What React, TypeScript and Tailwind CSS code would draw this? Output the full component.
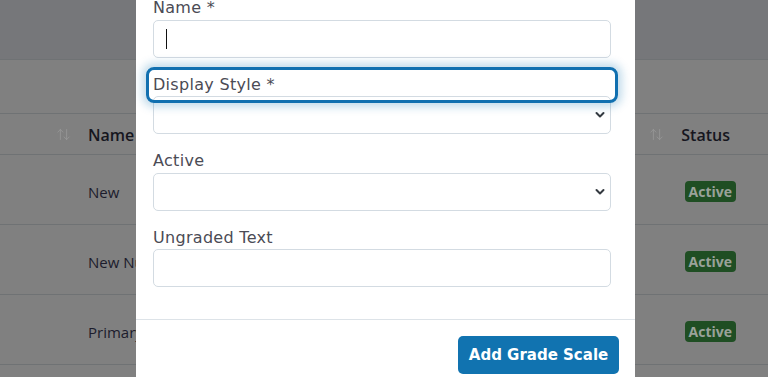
import React from 'react';
import { ArrowUpDown } from 'lucide-react';

const rows = ['New', 'New Number Scale', 'Primary Scale'];

const Chevron = () => (
  <svg
    className="pointer-events-none absolute right-[5px] top-1/2 -translate-y-1/2"
    width="10"
    height="7"
    viewBox="0 0 10 7"
    fill="none"
  >
    <path d="M1.5 1.5L5 5L8.5 1.5" stroke="#343a40" strokeWidth="2" strokeLinecap="round" strokeLinejoin="round" />
  </svg>
);

const Field = ({ label, children, focused }: { label: string; children: React.ReactNode; focused?: boolean }) => (
  <div className="mb-4">
    <label className="relative block text-[16px] leading-[22.5px] tracking-[0.3px] text-[#4b4b55]">
      {label}
      {focused && (
        <span className="pointer-events-none absolute -inset-[7px] z-10 rounded-[8px] border-[3px] border-[#1170b0] shadow-[0_0_9px_4px_rgba(17,115,176,0.25)]" />
      )}
    </label>
    {children}
  </div>
);

const SelectBox = () => (
  <div className="relative h-[38px] rounded-[5px] border border-[#d3dbe2] bg-white">
    <Chevron />
  </div>
);

const TextBox = ({ caret }: { caret?: boolean }) => (
  <div className="relative h-[38px] rounded-[5px] border border-[#d3dbe2] bg-white">
    {caret && <span className="absolute left-[12px] top-[8px] h-[20px] w-px bg-[#111]" />}
  </div>
);

export default function App() {
  return (
    <div
      className="relative h-[377px] w-[768px] overflow-hidden bg-[#808080]"
      style={{ fontFamily: '"DejaVu Sans", "Open Sans", sans-serif' }}
    >
      {/* page behind the backdrop */}
      <div className="h-[60px] border-b border-[#6f7274] bg-[#76777a]" />
      <div className="h-[54px] border-b border-[#6f7274]" />
      <div className="flex h-[41px] items-center border-b border-[#6f7274] pt-[1px] font-['Open_Sans',sans-serif] text-[16px] font-semibold text-[#16161e]">
        <ArrowUpDown className="ml-[56px] h-[15px] w-[15px] text-[#9b9b9b]" strokeWidth={1.2} />
        <span className="ml-[17px]">Name</span>
        <ArrowUpDown className="ml-auto h-[15px] w-[15px] text-[#9b9b9b]" strokeWidth={1.2} />
        <span className="ml-[17px] mr-[38px]">Status</span>
      </div>
      {rows.map((r) => (
        <div
          key={r}
          className="flex h-[70px] items-center border-b border-[#6f7274] pt-[5px] font-['Open_Sans',sans-serif] text-[15px] text-[#1c1c2c]"
        >
          <span className="ml-[88px]">{r}</span>
          <span className="ml-auto mr-[32px] mb-[2px] rounded-[4px] bg-[#1f4e23] px-[4px] text-[14px] font-bold leading-[21px] text-[#9aa29a]">
            Active
          </span>
        </div>
      ))}

      {/* modal */}
      <div className="absolute left-[136px] top-[-19px] w-[499px] bg-white">
        <div className="pb-4 pl-[17px] pr-[24px] pt-4">
          <Field label="Name *">
            <TextBox caret />
          </Field>
          <Field label="Display Style *" focused>
            <SelectBox />
          </Field>
          <Field label="Active">
            <SelectBox />
          </Field>
          <Field label="Ungraded Text">
            <TextBox />
          </Field>
        </div>
        <div className="flex justify-end border-t border-[#dde3e8] p-4 pb-10">
          <button className="h-[38px] w-[161px] rounded-[5px] bg-[#1173b0] text-[15px] font-bold text-white">
            Add Grade Scale
          </button>
        </div>
      </div>
    </div>
  );
}
